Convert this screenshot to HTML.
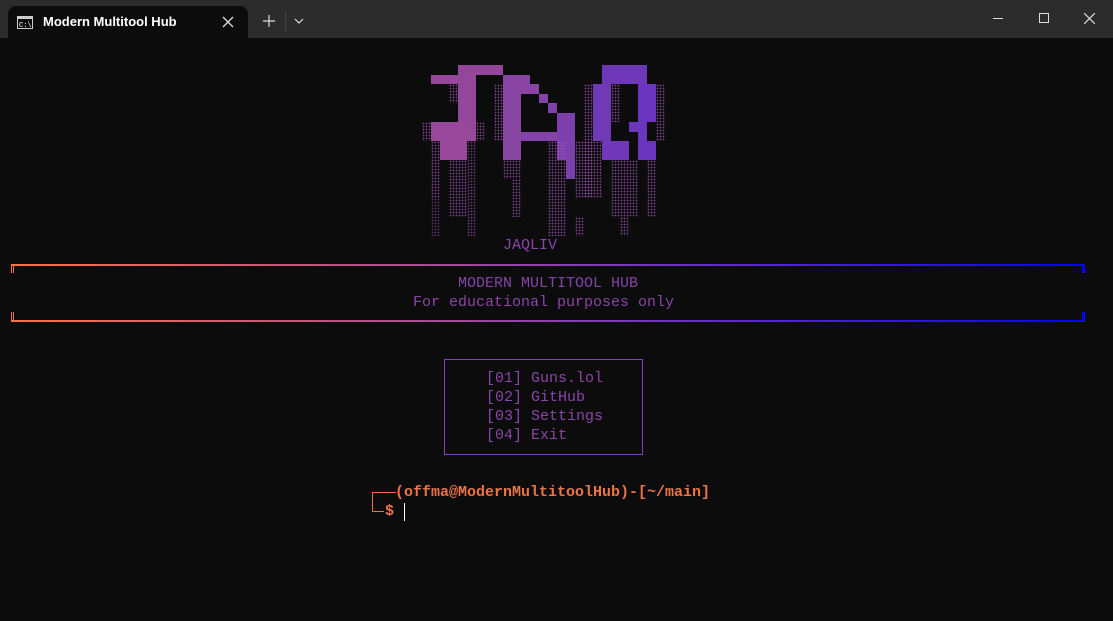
<!DOCTYPE html>
<html><head><meta charset="utf-8"><style>
*{margin:0;padding:0;box-sizing:border-box}
body{width:1113px;height:621px;background:#0c0c0c;overflow:hidden;position:relative;font-family:"Liberation Mono",monospace;font-size:15px}
.tb{position:absolute;left:0;top:0;width:1113px;height:38px;background:#2c2c2c}
.tab{position:absolute;left:8px;top:6px;width:240px;height:32px;background:#0c0c0c;border-radius:8px 8px 0 0}
.tab span{position:absolute;left:35px;top:8px;font-family:"Liberation Sans",sans-serif;font-size:13px;font-weight:bold;color:#fff}
.a{position:absolute}
.s{position:absolute}
.d{position:absolute;background-image:radial-gradient(circle,rgba(160,85,185,.75) 0.7px,transparent 1px);background-size:3px 3px}
.t{position:absolute;white-space:pre;line-height:19px}
</style></head><body>
<div class="tb">
 <div class="tab">
  <svg class="a" style="left:9px;top:10px" width="16" height="13"><rect x="0.5" y="0.5" width="15" height="12" fill="none" stroke="#ccc"/><rect x="1" y="1" width="14" height="2" fill="#ccc"/><text x="2" y="11" font-size="7" fill="#fff" font-family="Liberation Mono">C:\</text></svg>
  <span>Modern Multitool Hub</span>
  <svg class="a" style="left:214px;top:10px" width="12" height="12"><path d="M1 1L11 11M11 1L1 11" stroke="#ddd" stroke-width="1.3"/></svg>
 </div>
 <svg class="a" style="left:263px;top:15px" width="12" height="12"><path d="M6 0V12M0 6H12" stroke="#ddd" stroke-width="1.2"/></svg>
 <div class="a" style="left:285px;top:11px;width:1px;height:20px;background:#444"></div>
 <svg class="a" style="left:294px;top:18px" width="10" height="6"><path d="M1 1L5 5L9 1" stroke="#ddd" fill="none" stroke-width="1.2"/></svg>
 <div class="a" style="left:993px;top:18px;width:10px;height:1px;background:#ddd"></div>
 <div class="a" style="left:1039px;top:13px;width:10px;height:10px;border:1px solid #ddd"></div>
 <svg class="a" style="left:1084px;top:13px" width="11" height="11"><path d="M0 0L11 11M11 0L0 11" stroke="#ddd" stroke-width="1.2"/></svg>
</div>

<!-- logo -->
<div class="s" style="left:458px;top:65px;width:45px;height:10px;background:#94479a"></div>
<div class="s" style="left:431px;top:75px;width:45px;height:9px;background:#97489a"></div>
<div class="s" style="left:458px;top:75px;width:18px;height:66px;background:#93479b"></div>
<div class="s" style="left:431px;top:122px;width:45px;height:19px;background:#98489b"></div>
<div class="s" style="left:440px;top:141px;width:27px;height:19px;background:#97489b"></div>
<div class="s" style="left:503px;top:75px;width:27px;height:9px;background:#8a45a3"></div>
<div class="s" style="left:503px;top:84px;width:36px;height:10px;background:#8944a4"></div>
<div class="s" style="left:503px;top:94px;width:18px;height:66px;background:#8845a4"></div>
<div class="s" style="left:539px;top:94px;width:9px;height:9px;background:#8342a9"></div>
<div class="s" style="left:548px;top:103px;width:9px;height:10px;background:#8041aa"></div>
<div class="s" style="left:557px;top:113px;width:18px;height:47px;background:#7c40ac"></div>
<div class="s" style="left:566px;top:160px;width:9px;height:19px;background:#7b3fad"></div>
<div class="s" style="left:521px;top:132px;width:36px;height:9px;background:#8343a8"></div>
<div class="s" style="left:602px;top:65px;width:45px;height:19px;background:#6e37b8"></div>
<div class="s" style="left:593px;top:84px;width:18px;height:57px;background:#7039b6"></div>
<div class="s" style="left:638px;top:84px;width:18px;height:38px;background:#6a35bc"></div>
<div class="s" style="left:629px;top:122px;width:18px;height:10px;background:#6b36bb"></div>
<div class="s" style="left:638px;top:132px;width:9px;height:9px;background:#6b36bb"></div>
<div class="s" style="left:602px;top:141px;width:27px;height:19px;background:#6e38b8"></div>
<div class="s" style="left:638px;top:141px;width:18px;height:19px;background:#6a35bc"></div>
<!-- dither -->
<div class="d" style="left:422px;top:122px;width:9px;height:19px"></div>
<div class="d" style="left:476px;top:122px;width:9px;height:19px"></div>
<div class="d" style="left:449px;top:84px;width:9px;height:19px"></div>
<div class="d" style="left:494px;top:84px;width:9px;height:57px"></div>
<div class="d" style="left:431px;top:141px;width:9px;height:57px"></div>
<div class="d" style="left:431px;top:198px;width:9px;height:38px;opacity:.7"></div>
<div class="d" style="left:449px;top:160px;width:18px;height:57px"></div>
<div class="d" style="left:467px;top:141px;width:9px;height:95px;opacity:.8"></div>
<div class="d" style="left:503px;top:160px;width:18px;height:19px"></div>
<div class="d" style="left:512px;top:179px;width:9px;height:38px"></div>
<div class="d" style="left:548px;top:141px;width:18px;height:95px"></div>
<div class="d" style="left:575px;top:141px;width:18px;height:57px"></div>
<div class="d" style="left:584px;top:84px;width:9px;height:113px"></div>
<div class="d" style="left:575px;top:217px;width:9px;height:19px"></div>
<div class="d" style="left:611px;top:84px;width:9px;height:38px"></div>
<div class="d" style="left:593px;top:141px;width:9px;height:57px"></div>
<div class="d" style="left:611px;top:160px;width:27px;height:57px"></div>
<div class="d" style="left:620px;top:217px;width:9px;height:19px"></div>
<div class="d" style="left:656px;top:84px;width:9px;height:57px"></div>
<div class="d" style="left:647px;top:160px;width:9px;height:57px"></div>

<div class="t" style="left:503px;top:236px;color:#8a45a8">JAQLIV</div>

<!-- banner lines -->
<div class="a" style="left:11px;top:264px;width:1074px;height:2px;background:linear-gradient(90deg,#ff7043,#9040b0 50%,#0000ff)"></div>
<div class="a" style="left:11px;top:320px;width:1074px;height:2px;background:linear-gradient(90deg,#ff7043,#9040b0 50%,#0000ff)"></div>
<div class="a" style="left:11px;top:264px;width:3px;height:9px;border-left:1px solid #ff7043;border-right:1px solid #ff7043"></div>
<div class="a" style="left:11px;top:312px;width:3px;height:9px;border-left:1px solid #ff7043;border-right:1px solid #ff7043"></div>
<div class="a" style="left:1082px;top:264px;width:3px;height:9px;background:#0000ff"></div>
<div class="a" style="left:1082px;top:312px;width:3px;height:9px;background:#0000ff"></div>
<div class="t" style="left:458px;top:274px;color:#8344a8">MODERN MULTITOOL HUB</div>
<div class="t" style="left:413px;top:293px;color:#8a45a8">For educational purposes only</div>

<!-- menu -->
<div class="a" style="left:444px;top:359px;width:199px;height:96px;border:1px solid #8040b8"></div>
<div class="t" style="left:486px;top:369px;color:#8a45a8">[01] Guns.lol
[02] GitHub
[03] Settings
[04] Exit</div>

<!-- prompt -->
<div class="a" style="left:372px;top:492px;width:1px;height:20px;background:#ec7448"></div>
<div class="a" style="left:372px;top:492px;width:24px;height:1px;background:#ec7448"></div>
<div class="a" style="left:372px;top:511px;width:12px;height:1px;background:#ec7448"></div>
<div class="t" style="left:395px;top:483px;color:#ec7448;font-weight:bold">(offma@ModernMultitoolHub)-[~/main]</div>
<div class="t" style="left:385px;top:502px;color:#ec7448;font-weight:bold">$</div>
<div class="a" style="left:404px;top:503px;width:1px;height:18px;background:#fff"></div>
</body></html>
